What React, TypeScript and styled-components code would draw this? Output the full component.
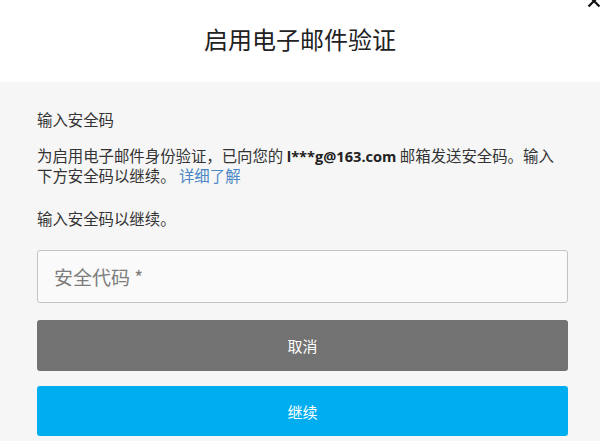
import React from "react";
import styled, { createGlobalStyle } from "styled-components";

const GlobalStyle = createGlobalStyle`
    html, body {
        margin: 0;
        padding: 0;
        background: #f6f6f6;
    }
    body {
        font-family: "Microsoft YaHei", "Noto Sans CJK SC", "Noto Sans", sans-serif;
        color: #333;
    }
`;

const Modal = styled.div`
    position: relative;
    width: 600px;
    height: 441px;
    overflow: hidden;
    display: flex;
    flex-direction: column;
    background: #f6f6f6;
`;

const Header = styled.div`
    height: 82px;
    background: #fff;
    display: flex;
    justify-content: center;
    align-items: center;
    padding-bottom: 5px;
    box-sizing: border-box;
`;

const Title = styled.h1`
    margin: 0;
    font-size: 24px;
    font-weight: 400;
    color: #222;
    line-height: 30px;
`;

const CloseButton = styled.button`
    position: absolute;
    top: -7px;
    right: -2px;
    width: 16px;
    height: 16px;
    padding: 0;
    border: none;
    background: none;
    display: flex;
    align-items: center;
    justify-content: center;
`;

const Body = styled.div`
    display: flex;
    flex-direction: column;
    padding: 27px 32px 0 37px;
`;

const Label = styled.p<{ $gap?: number }>`
    margin: ${(p) => p.$gap ?? 0}px 0 0;
    font-size: 15.4px;
    line-height: 20px;
`;

const Paragraph = styled.p`
    margin: 17px 0 0;
    font-size: 15.4px;
    line-height: 18.5px;
`;

const Email = styled.b`
    font-family: "Open Sans", "Noto Sans", sans-serif;
    font-weight: 700;
    font-size: 14.6px;
    color: #222;
`;

const Link = styled.a`
    color: #4a87c4;
    text-decoration: none;
`;

const CodeInput = styled.input`
    margin-top: 22px;
    height: 53px;
    box-sizing: border-box;
    border: 1px solid #c4c4c4;
    border-radius: 3px;
    background: #fafafa;
    padding: 0 16px;
    font-family: "Microsoft YaHei", "Noto Sans CJK SC", sans-serif;
    font-size: 19px;
    color: #333;
    outline: none;

    &::placeholder {
        color: #7d7d7d;
    }
`;

const ActionButton = styled.button<{ $primary?: boolean }>`
    margin-top: ${(p) => (p.$primary ? 15 : 17)}px;
    height: ${(p) => (p.$primary ? 50 : 51)}px;
    border: none;
    border-radius: 3px;
    background: ${(p) => (p.$primary ? "#00aeef" : "#727272")};
    color: #fff;
    font-family: "Microsoft YaHei", "Noto Sans CJK SC", sans-serif;
    font-size: 15px;
`;

const CloseIcon = () => (
    <svg width="14" height="14" viewBox="0 0 14 14">
        <path d="M1.5 1.5 L12.5 12.5 M12.5 1.5 L1.5 12.5" stroke="#111" strokeWidth="2.2" fill="none" />
    </svg>
);

export default function App() {
    return (
        <>
            <GlobalStyle />
            <Modal>
                <CloseButton aria-label="关闭">
                    <CloseIcon />
                </CloseButton>
                <Header>
                    <Title>启用电子邮件验证</Title>
                </Header>
                <Body>
                    <Label>输入安全码</Label>
                    <Paragraph>
                        为启用电子邮件身份验证，已向您的 <Email>l***g@163.com</Email> 邮箱发送安全码。输入下方安全码以继续。 <Link href="#">详细了解</Link>
                    </Paragraph>
                    <Label $gap={24}>输入安全码以继续。</Label>
                    <CodeInput placeholder="安全代码 *" />
                    <ActionButton>取消</ActionButton>
                    <ActionButton $primary>继续</ActionButton>
                </Body>
            </Modal>
        </>
    );
}
